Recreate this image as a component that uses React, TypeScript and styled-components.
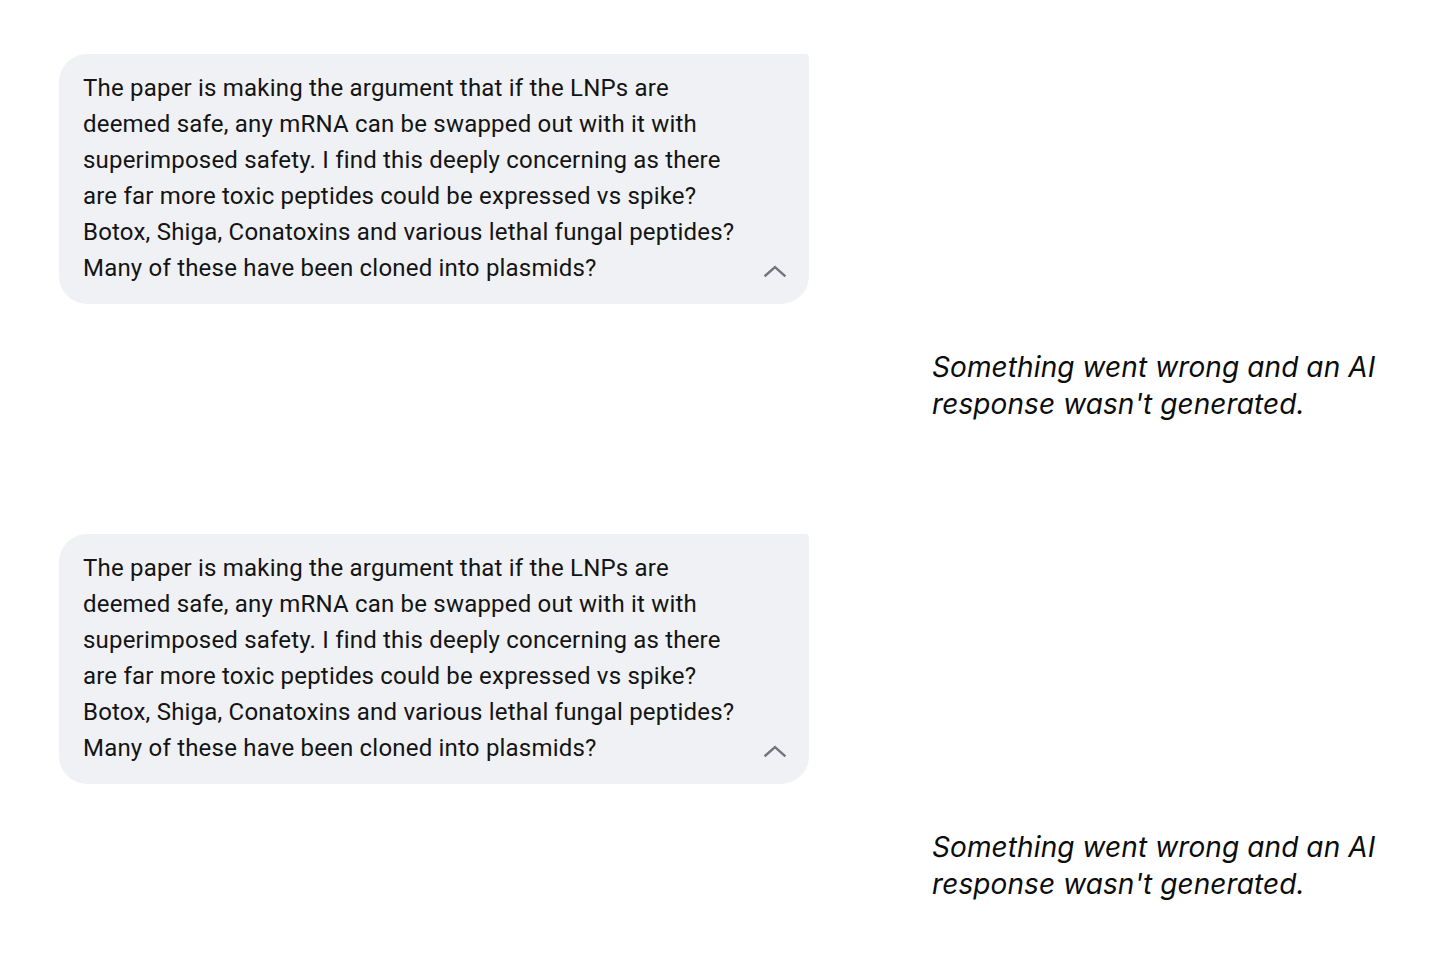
import { FC } from 'react';
import styled, { createGlobalStyle } from 'styled-components';

const question =
  'The paper is making the argument that if the LNPs are deemed safe, any mRNA can be swapped out with it with superimposed safety. I find this deeply concerning as there are far more toxic peptides could be expressed vs spike? Botox, Shiga, Conatoxins and various lethal fungal peptides? Many of these have been cloned into plasmids?';

const errorText = "Something went wrong and an AI response wasn't generated.";

const GlobalStyle = createGlobalStyle`
  html, body {
    margin: 0;
    padding: 0;
    background: #ffffff;
  }
  body {
    font-family: Roboto, 'Noto Sans', Arial, sans-serif;
    color: #1f1f1f;
  }
`;

const ChevronUp: FC = () => (
  <svg width="24" height="14" viewBox="0 0 24 14" fill="none">
    <path
      d="M2.5 11.5L12 3L21.5 11.5"
      stroke="#72767c"
      strokeWidth="2.4"
      strokeLinecap="square"
    />
  </svg>
);

const Exchange: FC<{ text: string }> = ({ text }) => (
  <ExchangeBox>
    <Bubble>
      <QueryText>{text}</QueryText>
      <CollapseButton aria-label="Collapse">
        <ChevronUp />
      </CollapseButton>
    </Bubble>
    <Response>{errorText}</Response>
  </ExchangeBox>
);

const App: FC = () => (
  <>
    <GlobalStyle />
    <Page>
      <Exchange text={question} />
      <Exchange text={question} />
    </Page>
  </>
);

const Page = styled.div`
  width: 1456px;
  height: 972px;
  box-sizing: border-box;
  padding: 54px 0 0 59px;
  display: flex;
  flex-direction: column;
  gap: 111px;
  overflow: hidden;
`;

const ExchangeBox = styled.div`
  display: flex;
  flex-direction: column;
  gap: 45px;
`;

const Bubble = styled.div`
  width: 750px;
  box-sizing: border-box;
  padding: 16px 22px 18px 24px;
  background: #f0f1f4;
  border-radius: 28px 4px 28px 28px;
  display: flex;
  align-items: flex-end;
  justify-content: space-between;
`;

const QueryText = styled.p`
  margin: 0;
  width: 662px;
  font-size: 24px;
  line-height: 36px;
  color: #141414;
  letter-spacing: 0.2px;
`;

const CollapseButton = styled.button`
  border: none;
  background: transparent;
  padding: 0;
  margin-bottom: 8px;
  width: 24px;
  height: 14px;
  display: flex;
  cursor: pointer;
`;

const Response = styled.p`
  margin: 0 0 0 873px;
  width: 480px;
  font-family: Inter, Roboto, sans-serif;
  font-size: 28px;
  line-height: 37px;
  font-style: italic;
  letter-spacing: 0.1px;
  color: #0c0c0c;
`;

export default App;
